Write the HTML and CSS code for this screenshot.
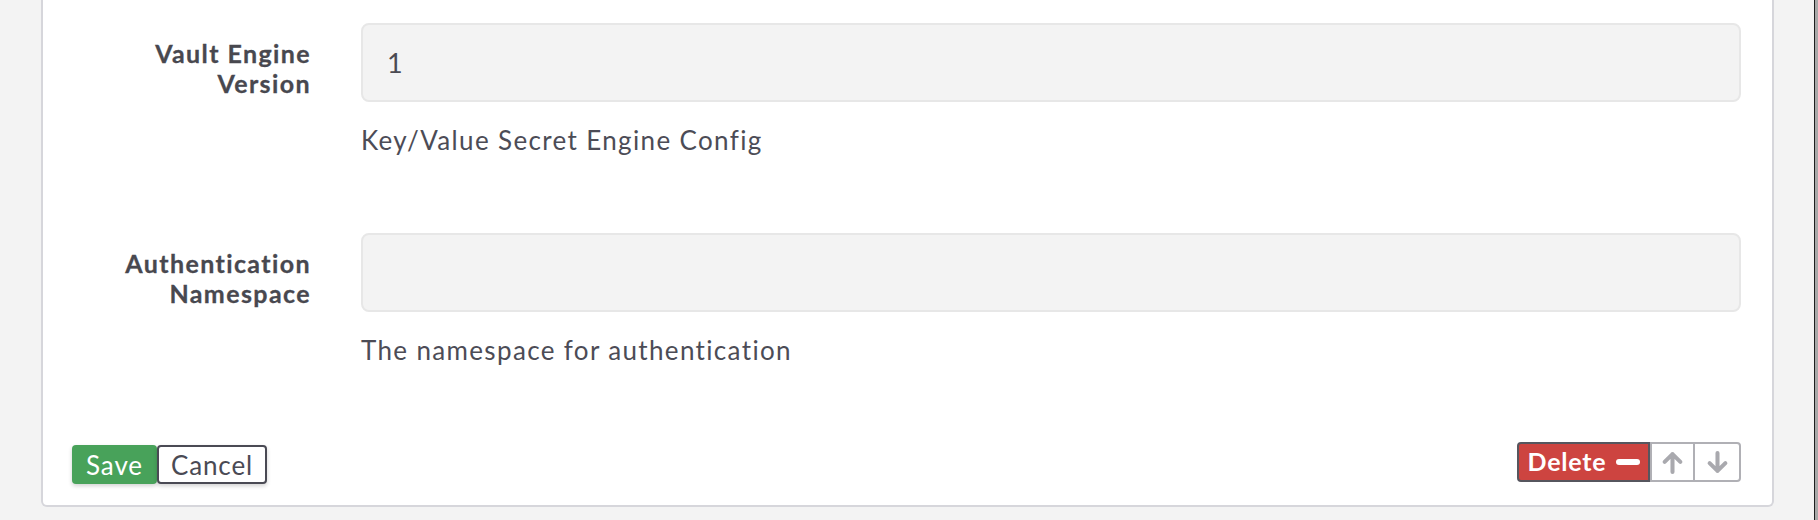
FILE: index.html
```html
<!DOCTYPE html>
<html>
<head>
<meta charset="utf-8">
<link rel="stylesheet" href="styles.css">
</head>
<body>
<div class="page">
  <div class="gutter"></div>
  <div class="card">
    <div class="form">
      <div class="row">
        <label class="label">Vault Engine Version</label>
        <div class="field">
          <div class="input">1</div>
          <p class="help">Key/Value Secret Engine Config</p>
        </div>
      </div>
      <div class="row">
        <label class="label">Authentication Namespace</label>
        <div class="field">
          <div class="input"></div>
          <p class="help">The namespace for authentication</p>
        </div>
      </div>
    </div>
    <div class="actions">
      <div class="left-actions">
        <button class="btn btn-save">Save</button>
        <button class="btn btn-cancel">Cancel</button>
      </div>
      <div class="item-actions">
        <button class="btn btn-delete">Delete<span class="minus"></span></button>
        <button class="btn btn-move btn-first">
          <svg width="27" height="27" viewBox="0 0 24 24"><path d="M12 20.5V4.5M5 11.5L12 4.5l7 7" fill="none" stroke="currentColor" stroke-width="3.6" stroke-linecap="round" stroke-linejoin="round"/></svg>
        </button>
        <button class="btn btn-move btn-last">
          <svg width="27" height="27" viewBox="0 0 24 24"><path d="M12 3.5v16M5 12.5L12 19.5l7-7" fill="none" stroke="currentColor" stroke-width="3.6" stroke-linecap="round" stroke-linejoin="round"/></svg>
        </button>
      </div>
    </div>
  </div>
  <div class="filler"></div>
  <div class="frame-edge"></div>
</div>
</body>
</html>
```
FILE: styles.css
```css
* { box-sizing: border-box; }
html, body { margin: 0; padding: 0; }
body {
  background: #f3f3f3;
  font-family: "Lato", "Open Sans", sans-serif;
  color: #4a4a54;
  width: 1818px;
  height: 520px;
  overflow: hidden;
}
.page {
  display: flex;
  align-items: flex-start;
  height: 520px;
}
.gutter { width: 41px; flex: none; }
.card {
  width: 1733px;
  flex: none;
  height: 507px;
  background: #fff;
  border: 2px solid #d6d6db;
  border-top: none;
  border-radius: 0 0 6px 6px;
  padding: 23px 31px 0 29px;
  display: flex;
  flex-direction: column;
}
.filler { width: 40px; flex: none; height: 520px; }
.frame-edge {
  width: 4px;
  height: 520px;
  flex: none;
  background: #a8a8a8;
  border-left: 1px solid #1e1e1e;
}
.form { display: flex; flex-direction: column; gap: 78px; }
.row {
  display: grid;
  grid-template-columns: 238px 1fr;
  column-gap: 51px;
}
.label {
  text-align: right;
  font-weight: 700;
  font-size: 25px;
  letter-spacing: 1.4px;
  line-height: 30px;
  padding-top: 15px;
  margin-right: -1px;
  color: #48484f;
  -webkit-text-stroke: 0.3px #48484f;
}
.input {
  height: 79px;
  background: #f3f3f3;
  border: 2px solid #e7e7e7;
  border-radius: 8px;
  font-size: 27px;
  line-height: 75px;
  padding-left: 24px;
  color: #4a4a52;
}
.help {
  margin: 23px 0 0;
  font-size: 26px;
  letter-spacing: 1.35px;
  line-height: 30px;
  color: #4c4c56;
}
.actions {
  margin-top: 80px;
  display: flex;
  justify-content: space-between;
  align-items: flex-start;
}
.left-actions { display: flex; }
.btn {
  font-family: inherit;
  font-size: 26px;
  letter-spacing: 0.9px;
  height: 39px;
  margin: 0;
  display: inline-flex;
  align-items: center;
  justify-content: center;
  cursor: pointer;
}
.btn-save {
  background: #48a25a;
  color: #fff;
  border: none;
  border-radius: 4px;
  padding: 0;
  width: 85px;
  box-shadow: 0 2px 4px rgba(0,0,0,0.18);
}
.btn-cancel {
  background: #fff;
  color: #4a4a54;
  border: 2px solid #4a4a54;
  border-radius: 4px;
  width: 110px;
  padding: 0;
  box-shadow: 0 2px 4px rgba(0,0,0,0.18);
}
.item-actions { display: flex; margin-top: -3px; }
.btn-delete {
  height: 40px;
  width: 133px;
  background: #cd4440;
  color: #fff;
  font-size: 25px;
  font-weight: 700;
  letter-spacing: 0.8px;
  border: 2px solid #56565e;
  border-radius: 4px 0 0 4px;
  padding: 0 0 2px;
  gap: 9px;
}
.minus {
  display: inline-block;
  width: 24px;
  height: 6px;
  border-radius: 3px;
  background: #fff;
  margin-top: 2px;
}
.btn-move {
  height: 40px;
  width: 45px;
  background: #fff;
  color: #a9a9ae;
  border: 2px solid #b0b0b5;
  border-left: none;
  padding: 0;
}
.btn-first { border-left: 2px solid #b0b0b5; }
.btn-last {
  width: 46px;
  border-radius: 0 4px 4px 0;
}
```
